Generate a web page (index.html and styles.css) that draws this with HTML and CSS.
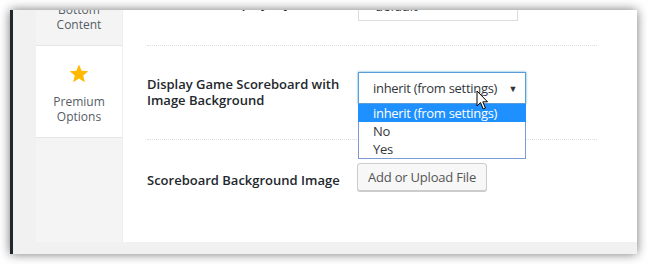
FILE: index.html
```html
<!DOCTYPE html>
<html>
<head>
    <title>Premium Options</title>
    <link rel="stylesheet" href="styles.css">
</head>
<body>
    <div class="shot">
        <div class="admin">
            <div class="panel">
                <div class="tabs">
                    <div class="tab">
                        <svg class="star" viewBox="0 0 20 19"><path d="M10 0.5l2.6 6.2 6.7 0.5-5.1 4.4 1.6 6.6L10 14.6l-5.8 3.6 1.6-6.6L0.7 7.2l6.7-0.5z"/></svg>
                        <div class="tab-label">Bottom<br>Content</div>
                    </div>
                    <div class="tab active">
                        <svg class="star" viewBox="0 0 20 19"><path d="M10 0.5l2.6 6.2 6.7 0.5-5.1 4.4 1.6 6.6L10 14.6l-5.8 3.6 1.6-6.6L0.7 7.2l6.7-0.5z"/></svg>
                        <div class="tab-label">Premium<br>Options</div>
                    </div>
                </div>
                <div class="main">
                    <div class="row row-first">
                        <div class="label">Scoreboard Display Style</div>
                        <div class="field"><div class="input">default</div></div>
                    </div>
                    <div class="row row-select">
                        <div class="label">Display Game Scoreboard with Image Background</div>
                        <div class="field">
                            <div class="select-wrap">
                                <div class="select">
                                    <span>inherit (from settings)</span>
                                    <span class="arrow">&#9660;</span>
                                </div>
                                <ul class="options">
                                    <li class="selected">inherit (from settings)</li>
                                    <li>No</li>
                                    <li>Yes</li>
                                </ul>
                                <svg class="cursor" viewBox="0 0 13 21"><path d="M1 1 L1 16 L4.5 12.6 L7.2 19 L9.4 18 L6.8 11.8 L11.5 11.8 Z"/></svg>
                            </div>
                        </div>
                    </div>
                    <div class="row row-last">
                        <div class="label label-single">Scoreboard Background Image</div>
                        <div class="field"><button class="button">Add or Upload File</button></div>
                    </div>
                </div>
            </div>
        </div>
    </div>
</body>
</html>
```

FILE: styles.css
```css
body {
    margin: 0;
    padding: 10px;
    background-color: White;
    font-family: "Open Sans", "Noto Sans", sans-serif;
}

.shot {
    width: 627px;
    height: 244px;
    box-shadow: 0 0 10px rgba(0, 0, 0, 0.55);
    overflow: hidden;
}

.admin {
    height: 244px;
    box-sizing: border-box;
    background-color: #F1F1F1;
    border-left: 3px solid #23282D;
    padding: 0 0 12px 23px;
}

.panel {
    display: flex;
    align-items: flex-start;
    height: 232px;
    overflow: hidden;
    background-color: White;
}

.tabs {
    width: 86px;
    height: 300px;
    flex-shrink: 0;
    margin-top: -56px;
    background-color: #F4F4F4;
    border-right: 1px solid #EEEEEE;
}

.tab {
    height: 92px;
    box-sizing: border-box;
    padding-top: 18px;
    border-bottom: 1px solid #E5E5E5;
    text-align: center;
    color: #555D66;
}

.tab.active {
    background-color: White;
}

.star {
    display: block;
    width: 20px;
    height: 19px;
    margin: 0 auto 11px auto;
    fill: #FFB900;
}

.tab-label {
    font-size: 12px;
    line-height: 15px;
}

.main {
    flex: 1;
    margin-top: -45px;
    padding: 0 40px 0 24px;
}

.row {
    display: flex;
    border-bottom: 1px dotted #DDDDDD;
}

.row-first {
    padding: 26px 0 24px 0;
}

.row-select {
    padding: 26px 0 31px 0;
}

.row-last {
    padding: 23px 0 60px 0;
    border-bottom: none;
}

.label {
    width: 211px;
    flex-shrink: 0;
    padding-top: 4px;
    font-size: 13px;
    line-height: 16px;
    font-weight: 600;
    color: #23282D;
}

.label-single {
    padding-top: 9px;
}

.input {
    width: 160px;
    height: 30px;
    box-sizing: border-box;
    border: 1px solid #DDDDDD;
    padding: 0 16px;
    font-size: 13px;
    line-height: 28px;
    color: #32373C;
}

.select-wrap {
    position: relative;
    width: 168px;
}

.select {
    display: flex;
    justify-content: space-between;
    align-items: center;
    height: 32px;
    box-sizing: border-box;
    padding: 0 8px 0 14px;
    border: 1px solid #5B9DD9;
    box-shadow: 0 0 2px rgba(30, 140, 190, 0.8);
    font-size: 13px;
    letter-spacing: -0.3px;
    color: #32373C;
}

.arrow {
    font-size: 9px;
    color: #333333;
}

.options {
    position: absolute;
    top: 32px;
    left: 0;
    width: 168px;
    box-sizing: border-box;
    margin: 0;
    padding: 0;
    list-style: none;
    background-color: White;
    border: 1px solid #7A9CD3;
    border-top: none;
}

.options li {
    height: 18px;
    line-height: 18px;
    padding-left: 14px;
    font-size: 13px;
    letter-spacing: -0.3px;
    color: #32373C;
}

.options li.selected {
    background-color: #1E90FF;
    color: White;
    margin: 0 -1px;
    padding-left: 15px;
}

.cursor {
    position: absolute;
    left: 118px;
    top: 18px;
    width: 13px;
    height: 21px;
}

.cursor path {
    fill: White;
    stroke: Black;
    stroke-width: 1;
}

.button {
    width: 130px;
    height: 28px;
    margin-left: -1px;
    padding: 0;
    font-family: inherit;
    font-size: 13px;
    letter-spacing: -0.2px;
    color: #555555;
    background-color: #F7F7F7;
    border: 1px solid #CCCCCC;
    border-radius: 3px;
    box-shadow: 0 1px 0 #CCCCCC;
}
```
